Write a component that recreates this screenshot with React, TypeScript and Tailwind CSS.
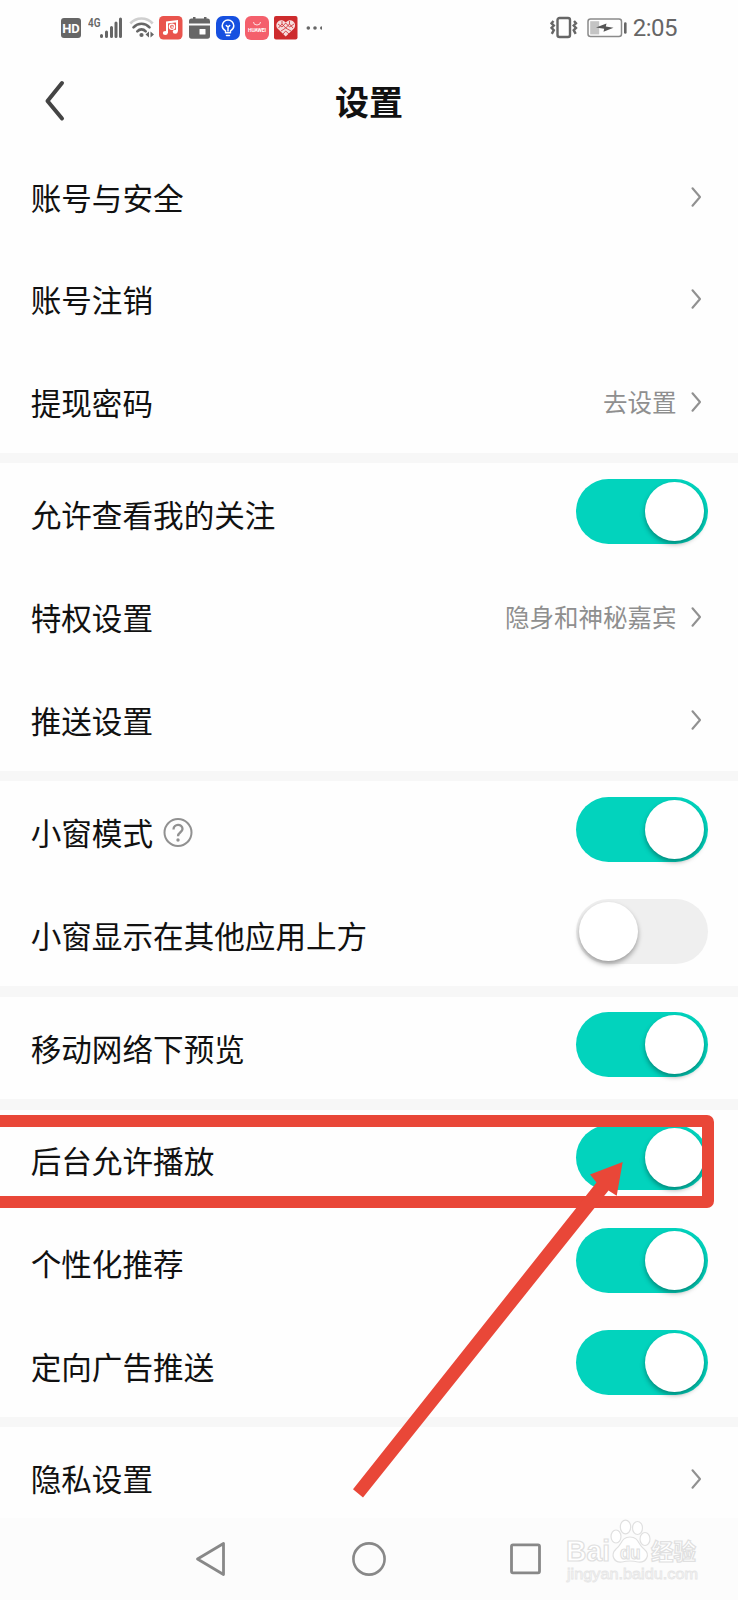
import { useState } from "react";

type Row = {
  label: string;
  kind: "link" | "switch";
  value?: string;
  on?: boolean;
  help?: boolean;
};

const SECTIONS: Row[][] = [
  [
    { label: "账号与安全", kind: "link" },
    { label: "账号注销", kind: "link" },
    { label: "提现密码", kind: "link", value: "去设置" },
  ],
  [
    { label: "允许查看我的关注", kind: "switch", on: true },
    { label: "特权设置", kind: "link", value: "隐身和神秘嘉宾" },
    { label: "推送设置", kind: "link" },
  ],
  [
    { label: "小窗模式", kind: "switch", on: true, help: true },
    { label: "小窗显示在其他应用上方", kind: "switch", on: false },
  ],
  [{ label: "移动网络下预览", kind: "switch", on: true }],
  [
    { label: "后台允许播放", kind: "switch", on: true },
    { label: "个性化推荐", kind: "switch", on: true },
    { label: "定向广告推送", kind: "switch", on: true },
  ],
  [{ label: "隐私设置", kind: "link" }],
];

function StatusBar() {
  return (
    <div className="flex h-14 items-center pl-[61px] pr-[61px] text-[#666]">
      {/* HD + signal */}
      <div className="flex h-5 w-5 items-center justify-center rounded-[3px] bg-[#666] font-['Roboto',sans-serif] text-[13px] font-bold leading-none text-white">
        HD
      </div>
      <svg className="ml-[7px]" width="36" height="24" viewBox="0 0 36 24">
        <text x="0" y="10.5" fontFamily="Roboto, sans-serif" fontSize="12.5" fontWeight="600" fill="#666" textLength="12.5" lengthAdjust="spacingAndGlyphs">4G</text>
        <path d="M13.5 19.5V20.5M18.5 16V20.5M23.5 11.5V20.5M28 7V20.5M32.5 3V20.5" stroke="#666" strokeWidth="3" strokeLinecap="round" />
      </svg>
      {/* wifi */}
      <svg className="ml-[5px]" width="26" height="24" viewBox="0 0 26 24" fill="none">
        <path d="M1.3 7.5C7.5.9 17.5.9 23.7 7.5" stroke="#cfcfcf" strokeWidth="2.6" />
        <path d="M4.5 11.3C9 6.6 16 6.6 20.5 11.3M8.3 15.3C10.8 12.7 14.2 12.7 16.7 15.3" stroke="#666" strokeWidth="2.6" strokeLinecap="round" />
        <circle cx="12.5" cy="19" r="2.1" fill="#666" />
        <path d="M20 15.5V21.5L16.5 18.5zM21.5 15.5V21.5L25 18.5z" fill="#666" />
      </svg>
      {/* music */}
      <svg className="ml-1" width="24" height="24" viewBox="0 0 24 24" fill="none">
        <rect width="23.5" height="23.5" rx="4.5" fill="#e9544d" />
        <path d="M8 17V6.5L18 5.2V15.5" stroke="#fff" strokeWidth="2" />
        <ellipse cx="6.3" cy="17" rx="2.5" ry="2" fill="#fff" />
        <ellipse cx="16.2" cy="15.7" rx="2.5" ry="2" fill="#fff" />
        <circle cx="13" cy="10.8" r="2.6" stroke="#fff" strokeWidth="1.3" />
        <path d="M13 9.5V12M14 10.5V12" stroke="#fff" />
      </svg>
      {/* calendar */}
      <svg className="ml-1.5" width="22" height="24" viewBox="0 0 22 24">
        <path d="M0 7.5V5.2Q0 2.5 2.5 2.5H4V1H6.5V2.5H15V1H17.5V2.5H19Q21 2.5 21 5.2V7.5zM0 9.5H21V20Q21 22.7 18.5 22.7H2.5Q0 22.7 0 20z" fill="#666" />
        <rect x="10.5" y="13" width="6" height="5.5" rx=".5" fill="#fff" />
      </svg>
      {/* bulb */}
      <svg className="ml-[5px]" width="24" height="24" viewBox="0 0 24 24" fill="none">
        <rect width="24" height="24" rx="7" fill="#1650e0" />
        <path d="M9.5 16V14.8C7.5 13.6 6.2 12.2 6.2 9.8A5.8 5.8 0 0 1 17.8 9.8C17.8 12.2 16.5 13.6 14.5 14.8V16M9.5 16.8H14.5M10.5 19.5H13.5M12 15V10.5M10.3 9.5L12 11.2 13.7 9.5" stroke="#fff" strokeWidth="1.5" strokeLinecap="round" />
      </svg>
      {/* app gallery */}
      <svg className="ml-[5px]" width="24" height="24" viewBox="0 0 24 24" fill="none">
        <rect width="24" height="24" rx="6" fill="#f4606c" />
        <path d="M8.5 6A3.5 3 0 0 0 15.5 6" stroke="#fff" strokeOpacity=".8" />
        <text x="3" y="15.8" fontFamily="Roboto, sans-serif" fontSize="5" fontWeight="700" fill="#fff" textLength="18">HUAWEI</text>
      </svg>
      {/* heart */}
      <svg className="ml-[5px]" width="24" height="24" viewBox="0 0 24 24" fill="none">
        <rect width="23.5" height="23.5" rx="2" fill="#cd2b2d" />
        <path d="M11.7 20.5L3.5 12.5C.5 8.5 4 3.5 8 4.2C10 4.5 11.7 6.5 11.7 6.5S13.5 4.5 15.5 4.2C19.5 3.5 23 8.5 20 12.5z" fill="#f6dcdc" />
        <path d="M4 8L8 11 11.7 7 15.5 11 20 8M4.5 12L8 8 11.7 12 15.5 8 19 12M7 15L11.7 12 17 15M9 18L11.7 15 15 18M8 5V8M15.5 5V8" stroke="#cd2b2d" strokeWidth=".8" />
      </svg>
      <svg className="ml-2" width="18" height="6" viewBox="0 0 18 6" fill="#666">
        <circle cx="2.3" cy="3" r="1.8" />
        <circle cx="9" cy="3" r="1.8" />
        <path d="M14 3Q14 1.3 16 1.3V4.7Q14 4.7 14 3z" />
      </svg>

      {/* vibrate + battery + clock */}
      <svg className="ml-auto" width="28" height="24" viewBox="0 0 28 24" fill="none" stroke="#666">
        <rect x="7.5" y="2" width="12.5" height="19" rx="2" strokeWidth="2.4" />
        <path d="M3.5 5L1.5 7.3 3.8 9.6 1.5 11.9 3.8 14.2 1.8 17.8M24 5L26 7.3 23.7 9.6 26 11.9 23.7 14.2 25.7 17.8" strokeWidth="2.4" />
      </svg>
      <svg className="ml-[9px]" width="41" height="20" viewBox="0 0 41 20" fill="none">
        <rect x="1" y="1" width="33.5" height="17.5" rx="2.5" stroke="#8a8a8a" strokeWidth="1.5" />
        <rect x="3.2" y="3.2" width="9" height="13.2" fill="#c4c4c4" />
        <path d="M9 9.5L19.5 5.5 18.8 8.5 26.5 9.7 16.5 13.8 17.2 10.8z" fill="#555" />
        <path d="M38.3 5.5V14.5" stroke="#666" strokeWidth="2.6" strokeLinecap="round" />
      </svg>
      <span className="ml-[5px] font-['Roboto',sans-serif] text-[24px] leading-none tracking-[-0.5px]">
        2:05
      </span>
    </div>
  );
}

function Chevron() {
  return (
    <svg width="11" height="22" viewBox="0 0 11 22" fill="none">
      <path d="M1.5 2.3L9 11 1.5 19.7" stroke="#919191" strokeWidth="2.1" strokeLinecap="round" strokeLinejoin="round" />
    </svg>
  );
}

function Toggle({ initial }: { initial: boolean }) {
  const [on, setOn] = useState(initial);
  return (
    <button
      role="switch"
      aria-checked={on}
      onClick={() => setOn(!on)}
      className={`mb-[6.5px] flex h-[65px] w-[132px] items-center rounded-full px-[3.5px] transition-colors ${
        on ? "justify-end bg-[#02d3bd]" : "justify-start bg-[#efefef]"
      }`}
    >
      <span className="h-[59px] w-[59px] rounded-full bg-white shadow-[0_3px_5px_rgba(0,0,0,0.35)]" />
    </button>
  );
}

function SettingRow({ row }: { row: Row }) {
  return (
    <div className="flex h-[102.55px] items-center justify-between pl-[30.7px] pr-[30.4px]">
      <div className="flex items-center">
        <span className="text-[30.6px] leading-none text-[#111]">{row.label}</span>
        {row.help && (
          <svg className="ml-2.5" width="31" height="31" viewBox="0 0 31 31" fill="none" stroke="#919191" strokeWidth="2">
            <circle cx="15" cy="15.5" r="13.5" />
            <path d="M10.5 12.5C10.5 6.5 19.5 6.5 19.5 12C19.5 15.3 15 15.3 15 19.3" strokeWidth="2.3" />
            <circle cx="15" cy="23" r="1.7" fill="#919191" stroke="none" />
          </svg>
        )}
      </div>
      {row.kind === "switch" ? (
        <Toggle initial={!!row.on} />
      ) : (
        <div className="flex items-center gap-[14.5px] pr-[5.6px]">
          {row.value && <span className="text-[24.5px] leading-none text-[#8f8f8f]">{row.value}</span>}
          <Chevron />
        </div>
      )}
    </div>
  );
}

function Watermark() {
  return (
    <svg className="absolute left-[560px] top-0" width="145" height="70" viewBox="0 0 145 70" fill="#fff" stroke="#e0e0e0" strokeWidth="1.2">
      <text x="6" y="43" fontFamily="'Liberation Sans', sans-serif" fontSize="29" fontWeight="700" textLength="44" lengthAdjust="spacingAndGlyphs">Bai</text>
      <ellipse cx="56" cy="18.5" rx="5" ry="6.5" />
      <ellipse cx="65.5" cy="9" rx="5.2" ry="6.8" />
      <ellipse cx="77.5" cy="10" rx="5" ry="6.5" />
      <ellipse cx="85" cy="21" rx="5" ry="6.5" />
      <path d="M70 19C79 19 78 27 84 31C91 37 86 45 78 44Q70 42 62 44C54 45 50 37 56 31C62 27 61 19 70 19z" />
      <text x="60" y="40.5" fontFamily="'Liberation Sans', sans-serif" fontSize="19" fontWeight="700" textLength="20.5" lengthAdjust="spacingAndGlyphs">du</text>
      <text x="91" y="41.5" fontFamily="'Noto Sans CJK SC', sans-serif" fontSize="22.5" fontWeight="700">经验</text>
      <text x="7" y="61" fontFamily="'Liberation Sans', sans-serif" fontSize="14" stroke="#e6e6e6" strokeWidth=".8" textLength="131" lengthAdjust="spacingAndGlyphs">jingyan.baidu.com</text>
    </svg>
  );
}

function NavBar() {
  return (
    <div className="relative flex h-[82px] items-center bg-[#fcfcfc]">
      <div className="flex w-full items-center justify-between pl-[195px] pr-[196px]">
        <svg width="32" height="36" viewBox="0 0 32 36" fill="none" stroke="#888" strokeWidth="2.8" strokeLinejoin="round">
          <path d="M28.5 2.5V33.5L2.5 18z" />
        </svg>
        <svg width="36" height="36" viewBox="0 0 36 36" fill="none" stroke="#888" strokeWidth="2.6">
          <circle cx="18" cy="18" r="15.6" />
        </svg>
        <svg width="32" height="32" viewBox="0 0 32 32" fill="none" stroke="#888" strokeWidth="2.8">
          <rect x="1.5" y="1.8" width="28" height="28" rx="1.5" />
        </svg>
      </div>
      <Watermark />
    </div>
  );
}

export default function App() {
  return (
    <div className="relative h-[1600px] w-full overflow-hidden bg-[#fefefe] font-['Noto_Sans_CJK_SC',sans-serif]">
      <div className="h-[1518px] overflow-hidden">
        <StatusBar />
        <header className="grid h-[89.6px] grid-cols-3 items-center">
          <svg className="ml-[43px]" width="24" height="42" viewBox="0 0 24 42" fill="none">
            <path d="M19 3L4.5 21 19 38.5" stroke="#444" strokeWidth="4" strokeLinecap="round" strokeLinejoin="round" />
          </svg>
          <h1 className="text-center text-[34px] font-bold leading-none text-[#111]">设置</h1>
        </header>
        <div className="flex flex-col gap-[10.25px] bg-[#f7f7f7]">
          {SECTIONS.map((rows) => (
            <section key={rows[0].label} className="bg-[#fefefe]">
              {rows.map((row) => (
                <SettingRow key={row.label} row={row} />
              ))}
            </section>
          ))}
        </div>
      </div>
      <NavBar />

      {/* Highlight box and pointer */}
      <div className="pointer-events-none absolute -left-5 top-[1114.5px] h-[93px] w-[734px] rounded-[7px] border-[12px] border-[#e94738]" />
      <svg className="pointer-events-none absolute left-[340px] top-[1150px]" width="300" height="360" viewBox="340 1150 300 360">
        <path d="M353 1489.3L596.5 1182.5 590 1174.5 622.7 1162 616.7 1195.8 608.5 1190.5 363 1497.5z" fill="#e94738" />
      </svg>
    </div>
  );
}
